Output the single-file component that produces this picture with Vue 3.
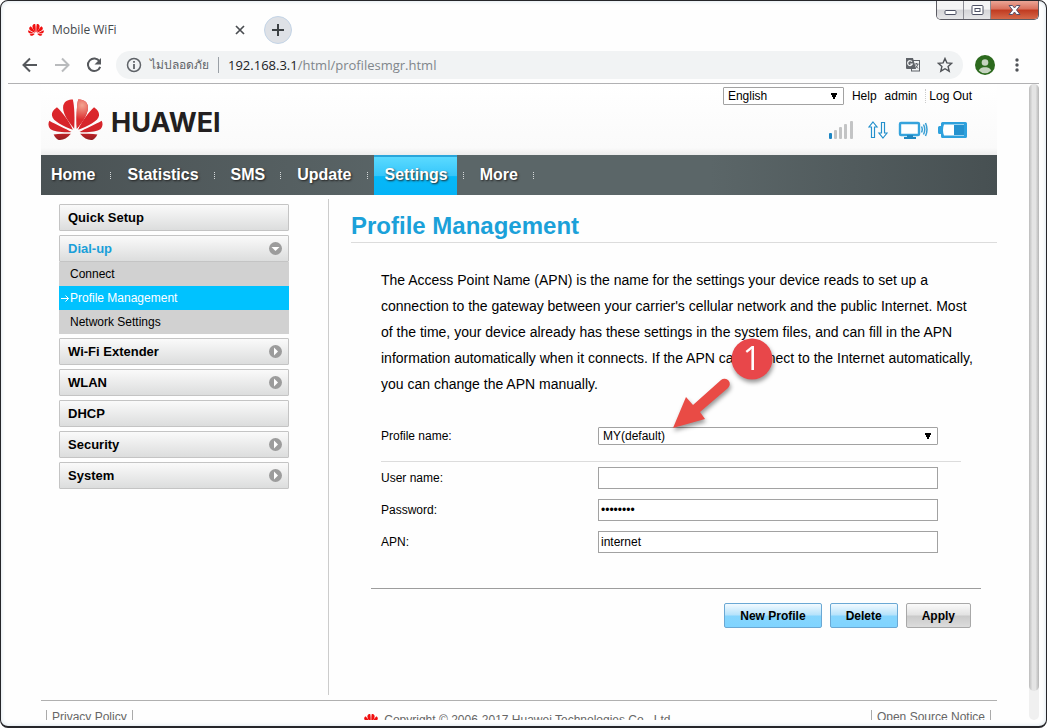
<script setup>
import { ref } from 'vue'

const navItems = ['Home', 'Statistics', 'SMS', 'Update', 'Settings', 'More']
const activeNav = 'Settings'

const menu = [
  { label: 'Quick Setup' },
  {
    label: 'Dial-up',
    open: true,
    arrow: true,
    children: ['Connect', 'Profile Management', 'Network Settings'],
  },
  { label: 'Wi-Fi Extender', arrow: true },
  { label: 'WLAN', arrow: true },
  { label: 'DHCP' },
  { label: 'Security', arrow: true },
  { label: 'System', arrow: true },
]
const activeSub = 'Profile Management'

const halfLogo = [
  'M221 385C200 360 184 335 188 315C192 301 204 297 217 297C222 320 223 355 221 385Z',
  'M217 388C190 378 155 362 154 345C153 332 162 325 169 320C185 335 208 365 217 388Z',
  'M213 395C190 397 160 394 149 386C142 378 142 368 146 361C165 372 195 385 213 395Z',
  'M211 400C200 412 190 419 178 419C168 418 162 408 159 402C175 400 195 400 211 400Z',
]

const userName = ref('')
const password = ref('password')
const apn = ref('internet')
</script>

<template>
  <div class="window">
    <header class="tabstrip">
      <div class="tab">
        <svg class="favicon" viewBox="142 296 166 125" aria-hidden="true">
          <g fill="#f01010">
            <path v-for="d in halfLogo" :key="d" :d="d" />
            <path v-for="d in halfLogo" :key="'r' + d" :d="d" transform="translate(450 0) scale(-1 1)" />
          </g>
        </svg>
        <span class="tab-title">Mobile WiFi</span>
        <button class="tab-close" type="button" aria-label="Close tab">
          <svg width="10" height="10" viewBox="0 0 10 10"><path d="M1 1l8 8M9 1l-8 8" stroke="#4a4d51" stroke-width="1.7" /></svg>
        </button>
      </div>
      <button class="new-tab" type="button" aria-label="New tab">
        <svg width="12" height="12" viewBox="0 0 12 12"><path d="M6 0v12M0 6h12" stroke="#3c4043" stroke-width="2" /></svg>
      </button>
      <div class="controls">
        <button class="ctl" type="button" aria-label="Minimize">
          <svg width="13" height="12" viewBox="0 0 13 12"><rect x="1" y="6.5" width="11" height="4" rx="1" fill="#fff" stroke="#4d5063" /></svg>
        </button>
        <button class="ctl" type="button" aria-label="Maximize">
          <svg width="13" height="12" viewBox="0 0 13 12"><rect x="1" y="1.5" width="11" height="9" rx="1" fill="#fff" stroke="#4d5063" /><rect x="4" y="4.5" width="5" height="3" fill="#fff" stroke="#4d5063" /></svg>
        </button>
        <button class="ctl ctl-close" type="button" aria-label="Close">
          <svg width="13" height="12" viewBox="0 0 13 12"><path d="M1 1.5h3.5L6.500 4 8.500 1.500H12L8.500 6 12 10.500H8.500L6.500 8 4.500 10.500H1L4.500 6Z" fill="#fff" stroke="#565069" /></svg>
        </button>
      </div>
    </header>

    <div class="toolbar">
      <button class="tool" type="button" aria-label="Back">
        <svg width="16" height="16" viewBox="0 0 16 16"><path d="M15 8H2M8 1.500L1.500 8 8 14.500" fill="none" stroke="#55585c" stroke-width="2" /></svg>
      </button>
      <button class="tool" type="button" aria-label="Forward">
        <svg width="16" height="16" viewBox="0 0 16 16"><path d="M1 8H14M8 1.500L14.500 8 8 14.500" fill="none" stroke="#b9bbbd" stroke-width="2" /></svg>
      </button>
      <button class="tool" type="button" aria-label="Reload">
        <svg width="16" height="16" viewBox="0 0 16 16"><path d="M13.500 4.200A6.300 6.300 0 1 0 14.200 9.800" fill="none" stroke="#55585c" stroke-width="2" /><path d="M15 1v6.500H8.500Z" fill="#55585c" /></svg>
      </button>
      <div class="omnibox">
        <svg width="16" height="16" viewBox="0 0 16 16" aria-hidden="true"><circle cx="8" cy="8" r="6.500" fill="none" stroke="#5f6368" stroke-width="1.500" /><path d="M8 7v5M8 4v1.700" stroke="#5f6368" stroke-width="1.800" /></svg>
        <span class="insecure">ไม่ปลอดภัย</span>
        <span class="omni-sep"></span>
        <span class="url"><b>192.168.3.1</b>/html/profilesmgr.html</span>
        <button class="tool" type="button" aria-label="Translate">
          <svg width="16" height="16" viewBox="0 0 16 16">
            <rect x="6.500" y="3.500" width="8" height="10.500" fill="#f1f3f4" stroke="#5f6368" />
            <path d="M1 1h7l3 11H2Q1 12 1 11Z" fill="#5f6368" />
            <path d="M7 4.700A2.400 2.400 0 1 0 7.300 7H5.200" fill="none" stroke="#f1f3f4" stroke-width="1.200" />
            <path d="M9.500 7h4M11.500 6v1M13 7q-1 3-3 4.500M10.500 8.500l2.500 3" fill="none" stroke="#5f6368" />
          </svg>
        </button>
        <button class="tool" type="button" aria-label="Bookmark">
          <svg width="16" height="16" viewBox="0 0 16 16"><path d="M8 1.500l1.900 4.400 4.800.4-3.600 3.200 1.100 4.700L8 11.700l-4.200 2.500 1.100-4.700L1.300 6.300l4.800-.4Z" fill="none" stroke="#505357" stroke-width="1.400" /></svg>
        </button>
      </div>
      <button class="tool avatar" type="button" aria-label="Profile">
        <svg width="20" height="20" viewBox="0 0 20 20"><circle cx="10" cy="10" r="10" fill="#2c6a1e" /><circle cx="10" cy="7.500" r="3.300" fill="#c5d3bf" /><path d="M3.800 15.500C5 12.800 8 12.300 10 12.300s5 .5 6.200 3.200A8.500 8.500 0 0 1 3.800 15.500Z" fill="#c5d3bf" /></svg>
      </button>
      <button class="tool" type="button" aria-label="Menu">
        <svg width="4" height="14" viewBox="0 0 4 14" fill="#505357"><circle cx="2" cy="2" r="1.700" /><circle cx="2" cy="7" r="1.700" /><circle cx="2" cy="12" r="1.700" /></svg>
      </button>
    </div>

    <div class="viewport">
      <div class="page">
        <div class="masthead">
          <a class="brand" href="#">
            <svg class="logo" viewBox="142 296 166 125" aria-hidden="true">
              <defs>
                <linearGradient id="petal" x1="0" y1="296" x2="0" y2="421" gradientUnits="userSpaceOnUse">
                  <stop offset="0" stop-color="#e0272c" /><stop offset="0.750" stop-color="#d4242a" /><stop offset="1" stop-color="#8f1f22" />
                </linearGradient>
                <radialGradient id="shine" cx="245" cy="314" r="44" gradientUnits="userSpaceOnUse">
                  <stop offset="0" stop-color="#f3a591" /><stop offset="1" stop-color="#db2c2e" />
                </radialGradient>
              </defs>
              <path v-for="d in halfLogo" :key="d" :d="d" fill="url(#petal)" />
              <g transform="translate(450 0) scale(-1 1)">
                <path v-for="d in halfLogo" :key="d" :d="d" fill="url(#petal)" />
              </g>
              <path d="M229 385C250 360 266 335 262 315C258 301 246 297 233 297C228 320 227 355 229 385Z" fill="url(#shine)" />
            </svg>
            <span class="wordmark">HUAWEI</span>
          </a>
          <div class="account">
            <div class="links">
              <select class="lang" aria-label="Language"><option>English</option></select>
              <a href="#">Help</a>
              <a href="#">admin</a>
              <a class="logout" href="#">Log Out</a>
            </div>
            <div class="status">
              <svg width="30" height="18" viewBox="0 0 30 18" aria-label="Signal">
                <rect x="1" y="12" width="3" height="6" rx="1" fill="#1c86c4" />
                <g fill="#c3c4c5"><rect x="6" y="9" width="3" height="9" rx="1" /><rect x="11" y="6" width="3" height="12" rx="1" /><rect x="16" y="3" width="3" height="15" rx="1" /><rect x="22" y="0" width="3" height="18" rx="1" /></g>
              </svg>
              <svg width="20" height="18" viewBox="0 0 20 18" aria-label="Data transfer">
                <path d="M5 1L9 6H6.500V16.500H3.500V6H1ZM15 17L19 12H16.500V1.500H13.500V12H11Z" fill="#fff" stroke="#2590cc" stroke-width="1.200" />
              </svg>
              <svg width="30" height="18" viewBox="0 0 30 18" aria-label="Connected devices">
                <rect x="2" y="2" width="19" height="12" rx="1" fill="#fff" stroke="#36a3dc" stroke-width="2.400" />
                <path d="M9 14h6v2h3v2H6v-2h3Z" fill="#1f86c0" />
                <path d="M23.500 5.500q1.500 3 0 6M25.500 3.500q2.500 5 0 10M27.500 2q3 6.500 0 13" fill="none" stroke="#3a9fd4" stroke-width="1.500" />
              </svg>
              <svg width="30" height="18" viewBox="0 0 30 18" aria-label="Battery">
                <path d="M3 5H1.500Q0 5 0 6.500v5Q0 13 1.500 13H3v2.500Q3 17 4.500 17h23q1.500 0 1.500-1.500v-13Q29 1 27.500 1h-23Q3 1 3 2.500Z" fill="#2ea1dd" />
                <path d="M6 3.500h20v11H6Q4 9 6 3.500Z" fill="#fff" />
                <rect x="16" y="4" width="10" height="10" fill="#2592cf" />
              </svg>
            </div>
          </div>
        </div>

        <nav class="nav">
          <a v-for="item in navItems" :key="item" href="#" :class="{ active: item === activeNav }">{{ item }}</a>
        </nav>

        <div class="body">
          <aside class="side">
            <div v-for="entry in menu" :key="entry.label" class="group">
              <button class="menu-item" :class="{ open: entry.open }" type="button">
                {{ entry.label }}
                <svg v-if="entry.arrow" width="13" height="13" viewBox="0 0 13 13" aria-hidden="true">
                  <circle cx="6.500" cy="6.500" r="6.500" fill="#9c9c9c" />
                  <path :d="entry.open ? 'M2.500 5h8L6.500 9Z' : 'M5 2.500v8L9 6.500Z'" fill="#fff" />
                </svg>
              </button>
              <template v-if="entry.children">
                <a v-for="sub in entry.children" :key="sub" class="sub" :class="{ current: sub === activeSub }" href="#">
                  <svg v-if="sub === activeSub" class="sub-arrow" width="8" height="7" viewBox="0 0 8 7" aria-hidden="true"><path d="M0 3.500h7.500M4.500.5l3 3-3 3" fill="none" stroke="#fff" /></svg>
                  {{ sub }}
                </a>
              </template>
            </div>
          </aside>

          <main class="main">
            <h1>Profile Management</h1>
            <div class="intro">
              <p>
                The Access Point Name (APN) is the name for the settings your device reads to set up a
                connection to the gateway between your carrier's cellular network and the public Internet. Most
                of the time, your device already has these settings in the system files, and can fill in the APN
                information automatically when it connects. If the APN can connect to the Internet automatically,
                you can change the APN manually.
              </p>
              <svg class="callout" width="110" height="110" viewBox="0 0 110 110" aria-label="Step 1">
                <path d="M5 93L18 62 25 70 53 45A5 5 0 0 1 60 53L32 77 37 84Z" fill="#e94b45" />
                <circle cx="84" cy="24" r="20.500" fill="#e8474a" />
                <text x="84" y="35" text-anchor="middle" fill="#fff">1</text>
              </svg>
            </div>
            <form @submit.prevent>
              <div class="row row-select">
                <label for="profile">Profile name:</label>
                <select id="profile"><option>MY(default)</option></select>
              </div>
              <div class="row">
                <label for="user">User name:</label>
                <input id="user" v-model="userName" type="text" />
              </div>
              <div class="row">
                <label for="pass">Password:</label>
                <input id="pass" v-model="password" type="password" />
              </div>
              <div class="row">
                <label for="apn">APN:</label>
                <input id="apn" v-model="apn" type="text" />
              </div>
              <div class="actions">
                <button class="btn blue" type="button">New Profile</button>
                <button class="btn blue" type="button">Delete</button>
                <button class="btn" type="submit">Apply</button>
              </div>
            </form>
          </main>
        </div>

        <footer class="footer">
          <a class="foot-link" href="#">Privacy Policy</a>
          <span class="copy">
            <svg class="favicon" viewBox="142 296 166 125" aria-hidden="true">
              <g fill="#f01010">
                <path v-for="d in halfLogo" :key="d" :d="d" />
                <path v-for="d in halfLogo" :key="'r' + d" :d="d" transform="translate(450 0) scale(-1 1)" />
              </g>
            </svg>
            Copyright © 2006-2017 Huawei Technologies Co., Ltd.
          </span>
          <a class="foot-link foot-end" href="#">Open Source Notice</a>
        </footer>
      </div>
      <div class="scrollbar"><div class="thumb"></div></div>
    </div>
  </div>
</template>

<style>
body {
  background: #fff;
}
</style>

<style scoped>
* {
  box-sizing: border-box;
}
.window {
  display: flex;
  flex-direction: column;
  height: 100vh;
  padding: 0 7px 6px;
  border: 1px solid #26262a;
  border-bottom-width: 2px;
  border-radius: 8px;
  background: #fefefe;
  box-shadow: inset 0 0 4px #d5e2ea;
  color: #000;
  font: 12px/14px "Liberation Sans", Arial, sans-serif;
  overflow: hidden;
}
button {
  border: 0;
  padding: 0;
  background: none;
  font: inherit;
  color: inherit;
}
svg {
  display: block;
  flex: none;
}
a {
  color: inherit;
  text-decoration: none;
}

/* browser chrome */
.tabstrip {
  display: flex;
  align-items: flex-start;
  height: 46px;
  flex: none;
}
.tab {
  display: flex;
  align-items: center;
  width: 256px;
  height: 46px;
  padding: 12px 19px 0 20px;
  gap: 8px;
}
.favicon {
  width: 16px;
  height: 12px;
}
.tab-title {
  flex: 1;
  font: 12px/16px "Open Sans", "Noto Sans", sans-serif;
  color: #45494d;
}
.new-tab {
  display: grid;
  place-items: center;
  width: 28px;
  height: 28px;
  margin-top: 15px;
  border: 1px solid #c3d4e6;
  border-radius: 50%;
  background: #dee1e6;
}
.controls {
  display: flex;
  margin-left: auto;
  border: 1px solid #5b5b63;
  border-top: 0;
  border-radius: 0 0 5px 5px;
  overflow: hidden;
}
.ctl {
  display: grid;
  place-items: center;
  width: 27px;
  height: 18px;
  border-right: 1px solid #8d8d94;
  background: linear-gradient(#f4f4f4 45%, #d5d5d8 50%, #e6e6e8);
}
.ctl-close {
  width: 47px;
  border-right: 0;
  background: linear-gradient(#eba596, #d9705c 45%, #c03a20 50%, #d5694a);
}
.toolbar {
  display: flex;
  align-items: center;
  flex: none;
  height: 37px;
  padding: 0 20px 0 14px;
  gap: 16px;
  border-bottom: 1px solid #b1b1b3;
}
.tool {
  display: grid;
  place-items: center;
}
.omnibox {
  display: flex;
  align-items: center;
  flex: 1;
  height: 28px;
  margin-left: -2px;
  margin-right: -4px;
  padding: 0 10px;
  border-radius: 14px;
  background: #f1f3f4;
  color: #80868b;
  font: 13px/20px "Open Sans", "Noto Sans", sans-serif;
}
.insecure {
  margin-left: 8px;
  font-size: 12px;
  color: #5f6368;
}
.omni-sep {
  width: 1px;
  height: 16px;
  margin: 0 9px;
  background: #9aa0a6;
}
.url {
  flex: 1;
}
.url b {
  font-weight: 400;
  color: #202124;
}
.omnibox .tool + .tool {
  margin-left: 16px;
}
.avatar {
  margin-right: 4px;
}
.viewport {
  display: flex;
  flex: 1;
  min-height: 0;
  overflow: hidden;
}
.scrollbar {
  flex: none;
  width: 10px;
  border-radius: 5px;
  background: #f0f0f0;
}
.thumb {
  height: 607px;
  max-height: 100%;
  border-radius: 5px;
  background: linear-gradient(90deg, #bcbcbc, #e4e4e4 35%, #e4e4e4 65%, #b5b5b5);
}

/* router page */
.page {
  flex: 1;
  padding: 0 32px 0 33px;
}
.masthead {
  display: flex;
  justify-content: space-between;
  height: 71px;
  background: linear-gradient(#fff, #fafafa 90%, #ededed);
}
.brand {
  display: flex;
  align-items: center;
  gap: 8px;
  padding: 0 0 0 7px;
}
.logo {
  width: 55px;
  height: 42px;
}
.wordmark {
  padding-top: 6px;
  color: #231f20;
  font: 700 27px/30px Inter, sans-serif;
}
.account {
  display: flex;
  flex-direction: column;
  padding: 3px 25px 0 0;
}
.links {
  display: flex;
  align-items: center;
  gap: 8px;
}
select {
  appearance: none;
  height: 18px;
  padding: 0 4px;
  border: 1px solid #a2a2a2;
  border-radius: 1px;
  background-color: #fff;
  background-image: conic-gradient(from -27deg at 50% 100%, #000 54deg, transparent 0);
  background-position: right 5px center;
  background-repeat: no-repeat;
  background-size: 8px 7px;
  color: #000;
  font: inherit;
}
.lang {
  width: 121px;
}
.logout {
  padding-left: 3px;
  border-left: 1px dotted #ccc;
}
.status {
  display: flex;
  justify-content: flex-end;
  gap: 10px;
  margin-top: 16px;
  padding-right: 4px;
}
.nav {
  display: flex;
  align-items: center;
  height: 40px;
  background: linear-gradient(90deg, #4a5254, #5b6668 40%, #5b6668 70%, #475052);
  color: #fff;
  font-size: 16px;
  font-weight: 700;
  text-shadow: 1px 1px 2px #222;
}
.nav a {
  display: flex;
  align-items: center;
  height: 40px;
  padding: 0 10px;
}
.nav a.active {
  padding: 0 10px 0 11px;
  box-shadow: inset 0 2px #2aa5da;
  background: linear-gradient(#5fdcff, #35c6fb 52%, #05b8f8 54%, #05b3f6);
}
.nav a::after {
  content: "";
  width: 0;
  height: 7px;
  margin-right: -17px;
  margin-left: 15px;
  border-left: 1px dotted #d5d9da;
}
.nav a + a {
  margin-left: 13px;
}
.body {
  display: flex;
  padding-top: 4px;
}
.side {
  display: flex;
  flex-direction: column;
  flex: none;
  width: 288px;
  height: 496px;
  padding: 5px 39px 0 18px;
  border-right: 1px solid #ccc;
  gap: 4px;
}
.menu-item {
  display: flex;
  align-items: center;
  justify-content: space-between;
  width: 100%;
  height: 27px;
  padding: 0 6px 0 8px;
  border: 1px solid #c4c4c4;
  border-radius: 1px;
  background: linear-gradient(#fafafa, #dcdddd);
  font-size: 13px;
  font-weight: 700;
}
.menu-item.open {
  color: #1a9fd9;
}
.sub {
  display: flex;
  align-items: center;
  height: 24px;
  padding-left: 11px;
  background: #d1d1d1;
}
.sub.current {
  padding-left: 2px;
  gap: 1px;
  background: #00c2ff;
  color: #fff;
}
.main {
  flex: 1;
  min-width: 0;
  padding-left: 22px;
}
h1 {
  margin: 0;
  padding: 12px 0 1px;
  border-bottom: 1px solid #dcdcdc;
  color: #1ba1d9;
  font-size: 24px;
  line-height: 30px;
}
.intro {
  position: relative;
  margin: 24px 16px 0 30px;
}
.intro p {
  margin: 0;
  font-size: 14px;
  line-height: 26px;
}
.callout {
  position: absolute;
  top: 68px;
  left: 287px;
  filter: drop-shadow(1px 3px 2px rgba(0, 0, 0, 0.4));
}
.callout text {
  font: 32px "Open Sans", sans-serif;
}
form {
  margin: 30px 16px 0 20px;
}
.row {
  display: flex;
  align-items: center;
  height: 32px;
  margin: 0 20px 0 10px;
}
.row label {
  flex: none;
  width: 217px;
}
.row input,
.row select {
  flex: 1;
  min-width: 0;
  margin-right: 23px;
}
.row input {
  height: 22px;
  padding: 0 2px;
  border: 1px solid #a2a2a2;
  background: #fff;
  color: #000;
  font: inherit;
}
.row-select {
  align-items: flex-start;
  height: 35px;
  border-bottom: 1px solid #dcdcdc;
}
.row-select label {
  padding-top: 2px;
}
.actions {
  display: flex;
  justify-content: flex-end;
  margin-top: 30px;
  padding: 14px 10px 0 0;
  border-top: 1px solid #9d9d9d;
  gap: 8px;
}
.btn {
  height: 25px;
  padding: 0 15px;
  border: 1px solid #a8a8a8;
  border-radius: 2px;
  background: linear-gradient(#fafafa, #e2e2e2 48%, #cacaca 52%, #dcdcdc);
  font-weight: 700;
}
.btn.blue {
  border-color: #6aa8d4;
  background: linear-gradient(#f2faff, #b5e2fb 48%, #86d5fd 52%, #7fd4ff);
}
.footer {
  display: grid;
  grid-template-columns: 1fr auto 1fr;
  align-items: start;
  margin-top: 5px;
  padding: 9px 6px 0 5px;
  border-top: 1px solid #b0b0b0;
  color: #666;
}
.foot-link {
  justify-self: start;
  padding: 0 5px;
  border: solid #aaa;
  border-width: 0 1px;
}
.foot-end {
  justify-self: end;
}
.copy {
  display: flex;
  align-items: center;
  gap: 5px;
  margin-top: 3px;
}
</style>
